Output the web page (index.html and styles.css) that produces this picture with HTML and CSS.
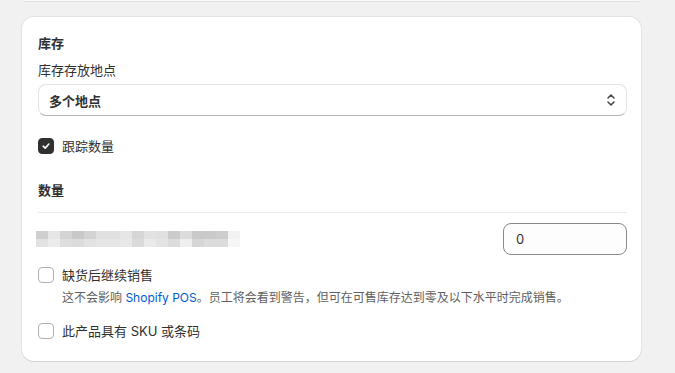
FILE: index.html
```html
<!DOCTYPE html>
<html lang="zh-CN">
<head>
<meta charset="utf-8">
<link rel="stylesheet" href="styles.css">
</head>
<body>
<div class="page">
  <div class="prev-card"></div>
  <section class="card">
    <h2 class="title">库存</h2>
    <div class="field">
      <label class="label">库存存放地点</label>
      <div class="select">
        <span>多个地点</span>
        <svg class="chev" width="12" height="14" viewBox="0 0 12 14"><path d="M3 5 L6 2 L9 5 M3 9 L6 12 L9 9" fill="none" stroke="#4a4a4a" stroke-width="1.6" stroke-linecap="round" stroke-linejoin="round"/></svg>
      </div>
    </div>
    <div class="check-row track">
      <span class="box checked"><svg width="10" height="10" viewBox="0 0 10 10"><path d="M2.2 5.2 L4.2 7.1 L7.9 3" fill="none" stroke="#fff" stroke-width="1.6" stroke-linecap="round" stroke-linejoin="round"/></svg></span>
      <span class="check-text">跟踪数量</span>
    </div>
    <h3 class="title sub">数量</h3>
    <div class="divider"></div>
    <div class="qty-row">
      <div class="blur">
        <div class="brow">
          <i style="background:#cfcfcf"></i><i style="background:#e6e6e6"></i><i style="background:#d4d4d4"></i><i style="background:#c8c8c8"></i><i style="background:#d3d3d3"></i><i style="background:#e0e0e0"></i><i style="background:#e0e0e0"></i><i style="background:#e6e6e6"></i><i style="background:#d6d6d6"></i><i style="background:#e2e2e2"></i><i style="background:#e0e0e0"></i><i style="background:#cbcbcb"></i><i style="background:#dcdcdc"></i><i style="background:#c9c9c9"></i><i style="background:#cacaca"></i><i style="background:#cdcdcd"></i><i style="background:#f2f2f2"></i>
        </div>
        <div class="brow">
          <i style="background:#e2e2e2"></i><i style="background:#ececec"></i><i style="background:#dedede"></i><i style="background:#dcdcdc"></i><i style="background:#e2e2e2"></i><i style="background:#e6e6e6"></i><i style="background:#e6e6e6"></i><i style="background:#e8e8e8"></i><i style="background:#dadada"></i><i style="background:#eaeaea"></i><i style="background:#e4e4e4"></i><i style="background:#dcdcdc"></i><i style="background:#efefef"></i><i style="background:#d6d6d6"></i><i style="background:#dcdcdc"></i><i style="background:#dcdcdc"></i><i style="background:#f6f6f6"></i>
        </div>
      </div>
      <div class="input">0</div>
    </div>
    <div class="check-row">
      <span class="box"></span>
      <span class="check-text">缺货后继续销售</span>
    </div>
    <p class="help">这不会影响 <a class="link">Shopify POS</a>。员工将会看到警告，但可在可售库存达到零及以下水平时完成销售。</p>
    <div class="check-row last">
      <span class="box"></span>
      <span class="check-text">此产品具有 SKU 或条码</span>
    </div>
  </section>
</div>
</body>
</html>
```

FILE: styles.css
```css
* { box-sizing: border-box; }
html, body {
  margin: 0;
  padding: 0;
  background: #f1f1f1;
  font-family: Inter, "Noto Sans CJK SC", sans-serif;
  font-size: 13px;
  color: #303030;
}
.page {
  width: 675px;
  height: 373px;
  overflow: hidden;
  padding: 0 34px 0 22px;
}
.prev-card {
  height: 2px;
  background: #fafafa;
  border-radius: 0 0 10px 10px;
  border-bottom: 1px solid #e0e0e0;
}
.card {
  margin-top: 15px;
  background: #fff;
  border-radius: 12px;
  box-shadow: 0 1px 0 0 #d4d4d4, 0 0 0 1px #e3e3e3;
  padding: 16px 14px 20px 16px;
  width: 619px;
}
.title {
  margin: 0;
  font-size: 13px;
  font-weight: 650;
  line-height: 20px;
  color: #303030;
}
.field { margin-top: 7px; }
.label {
  display: block;
  line-height: 20px;
  color: #303030;
}
.select {
  margin-top: 4px;
  height: 32px;
  border: 1px solid #e3e3e3;
  border-bottom-color: #b5b5b5;
  border-radius: 8px;
  display: flex;
  align-items: center;
  justify-content: space-between;
  padding: 0 9px 0 10px;
  font-weight: 650;
  color: #303030;
}
.chev { display: block; }
.check-row {
  display: flex;
  align-items: center;
  gap: 8px;
  line-height: 20px;
}
.check-row.track { margin-top: 20px; }
.box {
  width: 16px;
  height: 16px;
  border: 1px solid #b0b0b0;
  border-radius: 4px;
  background: #fff;
  display: flex;
  align-items: center;
  justify-content: center;
}
.box.checked {
  background: #303030;
  border-color: #303030;
}
.check-text { color: #303030; }
.title.sub { margin-top: 24px; }
.divider {
  margin-top: 12px;
  height: 1px;
  background: #ebebeb;
}
.qty-row {
  display: flex;
  align-items: center;
  justify-content: space-between;
  margin-top: 10px;
  height: 32px;
}
.blur { margin-left: -2px; }
.brow { display: flex; height: 8px; }
.brow i { display: block; width: 12px; height: 8px; }
.input {
  width: 124px;
  height: 32px;
  border: 1px solid #8a8a8a;
  border-radius: 8px;
  background: #fdfdfd;
  padding: 0 12px;
  line-height: 30px;
  color: #303030;
}
.qty-row + .check-row { margin-top: 10px; }
.help {
  margin: 4px 0 0 24px;
  font-size: 12px;
  line-height: 18px;
  color: #616161;
}
.link { color: #005bd3; }
.check-row.last { margin-top: 14px; }
```
